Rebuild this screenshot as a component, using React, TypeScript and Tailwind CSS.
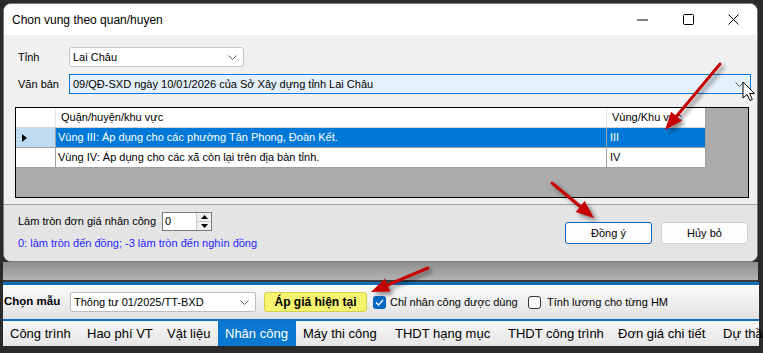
import React from 'react'

function Chevron({ color = '#606060' }: { color?: string }) {
  return (
    <svg width="9" height="5" viewBox="0 0 9 5">
      <path d="M0.5 0.5 L4.5 4.5 L8.5 0.5" fill="none" stroke={color} strokeWidth="1" />
    </svg>
  )
}

function Arrows() {
  // red callout arrows + mouse pointer, painted over the screenshot
  const arrows = [
    { line: 'M720 64 L676.5 116.2', head: '665,130 681.9,120.7 671.1,111.7' },
    { line: 'M552 183 L580.2 206.5', head: '594,218 575.7,211.9 584.7,201.1' },
    { line: 'M428 268 L387.6 285', head: '371,292 384.9,278.5 390.3,291.5' },
  ]
  return (
    <svg className="pointer-events-none absolute left-0 top-0" width="763" height="353" viewBox="0 0 763 353">
      <defs>
        <filter id="sh" x="-20%" y="-20%" width="140%" height="140%">
          <feDropShadow dx="3" dy="3" stdDeviation="2" floodColor="#000" floodOpacity="0.45" />
        </filter>
      </defs>
      {arrows.map((a) => (
        <g key={a.line} filter="url(#sh)">
          <path d={a.line} stroke="#c40000" strokeWidth="3" strokeLinecap="round" />
          <polygon points={a.head} fill="#c40000" />
        </g>
      ))}
      <path
        d="M743 82 L743 98 L747 94.5 L750 100.5 L752.3 99.5 L749.5 93.5 L754.5 93.5 Z"
        fill="#fff"
        stroke="#000"
        strokeWidth="1"
        strokeLinejoin="round"
      />
    </svg>
  )
}

const tabs = [
  { label: 'Công trình', w: 'w-[77px]' },
  { label: 'Hao phí VT', w: 'w-[80px]' },
  { label: 'Vật liệu', w: 'w-[58px]' },
  { label: 'Nhân công', w: 'w-[78px]', active: true },
  { label: 'Máy thi công', w: 'w-[92px]' },
  { label: 'THDT hạng mục', w: 'w-[113px]' },
  { label: 'THDT công trình', w: 'w-[110px]' },
  { label: 'Đơn giá chi tiết', w: 'w-[105px]' },
  { label: 'Dự thầu', w: 'w-[80px]' },
]

export default function App() {
  return (
    <div className="relative h-[353px] w-[763px] overflow-hidden bg-[#2b2b2b] pl-[3px] pt-[3px] font-['Liberation_Sans',Arial,sans-serif] text-[11px] text-black">
      {/* dialog */}
      <div className="w-[755px] overflow-hidden rounded-[8px] border border-[#7a7a7a] bg-[#f0f0f0]">
        <div className="flex h-[31px] items-center justify-between bg-white pl-[8px]">
          <span className="text-[12px]">Chon vung theo quan/huyen</span>
          <div className="flex h-full items-center">
            <div className="flex w-[46px] items-center justify-center">
              <svg width="11" height="2" viewBox="0 0 11 2"><path d="M0 1 H11" stroke="#000" strokeWidth="1" /></svg>
            </div>
            <div className="flex w-[46px] items-center justify-center">
              <svg width="11" height="11" viewBox="0 0 11 11"><rect x="0.5" y="0.5" width="10" height="10" rx="1" fill="none" stroke="#000" strokeWidth="1" /></svg>
            </div>
            <div className="flex w-[46px] items-center justify-center pr-[2px]">
              <svg width="11" height="11" viewBox="0 0 11 11"><path d="M0.5 0.5 L10.5 10.5 M10.5 0.5 L0.5 10.5" stroke="#000" strokeWidth="1" /></svg>
            </div>
          </div>
        </div>

        <div className="pb-[6px] pt-[12px]">
          <div className="flex h-[20px] items-center pl-[14px]">
            <span className="w-[51px]">Tỉnh</span>
            <div className="flex h-[20px] w-[175px] items-center justify-between rounded-[3px] border border-[#c4c4c4] bg-white pl-[3px] pr-[6px]">
              <span>Lai Châu</span>
              <Chevron />
            </div>
          </div>
          <div className="mt-[7px] flex h-[20px] items-center pl-[14px]">
            <span className="w-[51px]">Văn bản</span>
            <div className="flex h-[20px] w-[682px] items-center justify-between border border-[#0078d7] bg-[#e5f1fb] pl-[3px] pr-[6px]">
              <span>09/QĐ-SXD ngày 10/01/2026 của Sở Xây dựng tỉnh Lai Châu</span>
              <Chevron />
            </div>
          </div>

          <div className="ml-[11px] mt-[13px] h-[91px] w-[734px] border border-black bg-[#ababab]">
            <div className="w-[690px] border-r border-[#a0a0a0] bg-white">
              <div className="flex h-[20px] items-center border-b border-[#d4d4d4]">
                <div className="h-full w-[40px] border-r border-[#e4e4e4]" />
                <div className="flex h-full w-[551px] items-center border-r border-[#e4e4e4] pl-[5px]">Quận/huyện/khu vực</div>
                <div className="flex h-full w-[98px] items-center pl-[5px]">Vùng/Khu vực</div>
              </div>
              <div className="flex h-[20px] items-center border-b border-[#a0a0a0]">
                <div className="flex h-full w-[40px] items-center border-r border-[#a0a0a0] bg-[#c0dcf3] pl-[6px]">
                  <svg width="5" height="8" viewBox="0 0 5 8"><path d="M0 0 L5 4 L0 8 Z" fill="#000" /></svg>
                </div>
                <div className="flex h-full w-[551px] items-center border-r border-[#a0a0a0] bg-[#0078d7] pl-[2px] text-white">
                  Vùng III: Áp dụng cho các phường Tân Phong, Đoàn Kết.
                </div>
                <div className="flex h-full w-[98px] items-center bg-[#0078d7] pl-[3px] text-white">III</div>
              </div>
              <div className="flex h-[20px] items-center border-b border-[#a0a0a0]">
                <div className="h-full w-[40px] border-r border-[#a0a0a0]" />
                <div className="flex h-full w-[551px] items-center border-r border-[#a0a0a0] pl-[2px]">
                  Vùng IV: Áp dụng cho các xã còn lại trên địa bàn tỉnh.
                </div>
                <div className="flex h-full w-[98px] items-center pl-[3px]">IV</div>
              </div>
            </div>
          </div>
        </div>

        <div className="flex h-[57px] border-t border-[#a0a0a0] bg-[#e4e4e4] pl-[14px] pr-[9px]">
          <div className="pt-[7px]">
            <div className="flex h-[19px] items-center">
              <span className="w-[144px]">Làm tròn đơn giá nhân công</span>
              <div className="flex h-[19px] w-[50px] items-center justify-between border border-[#7a7a7a] bg-white pl-[2px]">
                <span>0</span>
                <div className="flex h-full w-[15px] flex-col border-l border-[#c8c8c8]">
                  <div className="flex flex-1 items-center justify-center border-b border-[#c8c8c8] bg-[#f0f0f0]">
                    <svg width="7" height="4" viewBox="0 0 7 4"><path d="M0 4 L3.5 0 L7 4 Z" fill="#000" /></svg>
                  </div>
                  <div className="flex flex-1 items-center justify-center bg-[#f0f0f0]">
                    <svg width="7" height="4" viewBox="0 0 7 4"><path d="M0 0 L3.5 4 L7 0 Z" fill="#000" /></svg>
                  </div>
                </div>
              </div>
            </div>
            <div className="mt-[5px] leading-[14px] text-[#2424ff]">0: làm tròn đến đồng; -3 làm tròn đến nghìn đồng</div>
          </div>
          <div className="ml-auto flex gap-[9px] pt-[17px]">
            <div className="flex h-[22px] w-[87px] items-center justify-center rounded-[3px] border border-[#0067c0] bg-[#fdfdfd]">Đồng ý</div>
            <div className="flex h-[22px] w-[87px] items-center justify-center rounded-[3px] border border-[#d0d0d0] bg-[#fdfdfd]">Hủy bỏ</div>
          </div>
        </div>
      </div>

      {/* main window behind the dialog */}
      <div className="h-[18px] w-[755px] bg-gradient-to-b from-[#8e8e8e] to-[#b2b2b2]" />
      <div className="h-[2px] w-[756px] bg-[#3a3a3a]" />
      <div className="h-[3px] w-[756px] bg-[#0e6fbf]" />
      <div className="flex h-[34px] w-[756px] items-center bg-gradient-to-b from-[#fbfbfb] to-[#e2e2e2] pl-[1px]">
        <span className="w-[66px] text-[11.5px] font-bold">Chọn mẫu</span>
        <div className="flex h-[20px] w-[186px] items-center justify-between rounded-[2px] border border-[#bdbdbd] bg-white pl-[3px] pr-[6px]">
          <span>Thông tư 01/2025/TT-BXD</span>
          <Chevron />
        </div>
        <div className="ml-[8px] flex h-[20px] w-[103px] items-center justify-center rounded-[3px] border border-[#d2d24a] bg-[#f6f46e] text-[12px] font-bold">
          Áp giá hiện tại
        </div>
        <div className="ml-[6px] flex h-[13px] w-[13px] items-center justify-center rounded-[3px] bg-[#0067c0]">
          <svg width="9" height="7" viewBox="0 0 9 7"><path d="M1 3.5 L3.5 6 L8 1" fill="none" stroke="#fff" strokeWidth="1.3" /></svg>
        </div>
        <span className="ml-[4px] w-[138px]">Chỉ nhân công được dùng</span>
        <div className="h-[13px] w-[13px] rounded-[3px] border border-[#333] bg-white" />
        <span className="ml-[6px]">Tính lương cho từng HM</span>
      </div>
      <div className="h-[2px] w-[756px] bg-[#0e6fbf]" />
      <div className="flex h-[25px] w-[756px] items-stretch bg-gradient-to-b from-[#f7f7f7] to-[#e6e6e6] text-[13px]">
        {tabs.map((t) => (
          <div
            key={t.label}
            className={
              t.active
                ? `flex shrink-0 items-center whitespace-nowrap bg-[#0a78cf] pl-[7px] text-white ${t.w}`
                : `flex shrink-0 items-center whitespace-nowrap pl-[7px] ${t.w}`
            }
          >
            {t.label}
          </div>
        ))}
      </div>

      <Arrows />
    </div>
  )
}
